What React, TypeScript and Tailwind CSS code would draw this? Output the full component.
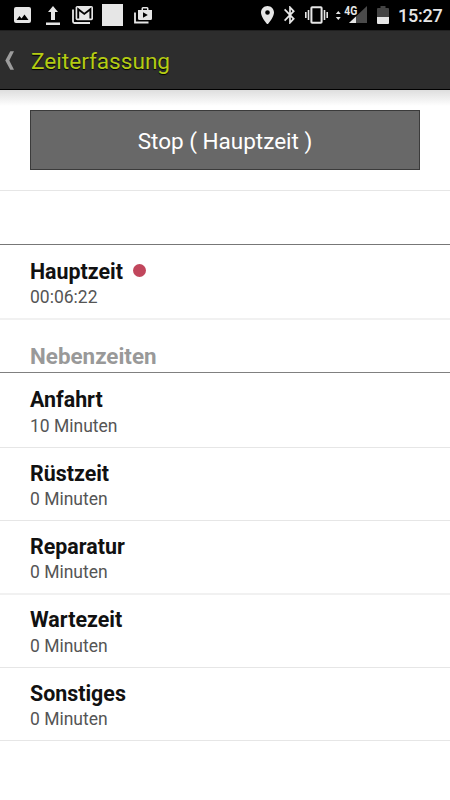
import React from 'react';

const nebenzeiten = [
  { label: 'Anfahrt', value: '10 Minuten', className: 'h-[75px] border-b border-[#e6e6e6] pt-[13px] leading-[26px]' },
  { label: 'Rüstzeit', value: '0 Minuten', className: 'h-[73px] border-b border-[#e6e6e6] pt-3 leading-6' },
  { label: 'Reparatur', value: '0 Minuten', className: 'h-[74px] border-b-2 border-[#f1f1f1] pt-3 leading-6' },
  { label: 'Wartezeit', value: '0 Minuten', className: 'h-[73px] border-b border-[#e6e6e6] pt-[11px] leading-[26px]' },
  { label: 'Sonstiges', value: '0 Minuten', className: 'h-[73px] border-b border-[#e6e6e6] pt-3 leading-6' },
];

const StatusBar: React.FC = () => (
  <div className="flex h-[30px] items-start bg-black pr-2 pl-3.5 text-[#e6e6e6]">
    {/* Notifications */}
    <svg className="mt-[7px] h-4 w-[17px]" viewBox="0 0 17 16" fill="currentColor">
      <path fillRule="evenodd" d="M2 0h13a2 2 0 0 1 2 2v12a2 2 0 0 1-2 2H2a2 2 0 0 1-2-2V2a2 2 0 0 1 2-2ZM2.5 13h12l-4-5.4-3 3.9-2-2.4Z" />
    </svg>
    <svg className="mt-1.5 ml-[15px] h-[19px] w-[14px]" viewBox="0 0 14 19" fill="currentColor">
      <path d="M7 0 12 6H9v8H5V6H2ZM0 16.5h14V19H0Z" />
    </svg>
    <svg className="mt-1.5 ml-[12px] h-[18px] w-[21px]" viewBox="0 0 21 18" fill="none">
      <path d="M1 3.5v12A1.5 1.5 0 0 0 2.5 17H18" stroke="currentColor" strokeWidth="1.8" />
      <rect x="3.6" y="0" width="17.4" height="14.2" rx="1.6" fill="currentColor" />
      <path d="M6.2 12.4V3.2l6.1 4.7 6.1-4.7v9.2" stroke="#000" strokeWidth="1.9" />
    </svg>
    <div className="mt-1 ml-[9px] h-[21.5px] w-[21px] bg-[#e6e6e6]" />
    <svg className="mt-[7px] ml-[11px] h-[17px] w-[18px]" viewBox="0 0 18 17">
      <path d="M1 5.5v10h13.5" fill="none" stroke="currentColor" strokeWidth="1.8" />
      <path fill="currentColor" fillRule="evenodd" d="M7.5 3V1.5A1.5 1.5 0 0 1 9 0h4a1.5 1.5 0 0 1 1.5 1.5V3H18v8.5a1.5 1.5 0 0 1-1.5 1.5h-11A1.5 1.5 0 0 1 4 11.5V3Zm1.5 0h4V1.5H9ZM9 5.2v5.6L13.8 8Z" />
    </svg>

    {/* System icons */}
    <svg className="mt-[5.5px] ml-auto h-[18.5px] w-[13px]" viewBox="5 2 14 20" preserveAspectRatio="none" fill="currentColor">
      <path d="M12 2C8.13 2 5 5.13 5 9c0 5.25 7 13 7 13s7-7.75 7-13c0-3.87-3.13-7-7-7zm0 9.5a2.5 2.5 0 0 1 0-5 2.5 2.5 0 0 1 0 5z" />
    </svg>
    <svg className="mt-1.5 ml-2.5 h-[18px] w-3" viewBox="5 2 14 20" preserveAspectRatio="none" fill="currentColor">
      <path d="M17.71 7.71 12 2h-1v7.59L6.41 5 5 6.41 10.59 12 5 17.59 6.41 19 11 14.41V22h1l5.71-5.71-4.3-4.29 4.3-4.29zM13 5.83l1.88 1.88L13 9.59V5.83zm1.88 10.46L13 18.17v-3.76l1.88 1.88z" />
    </svg>
    <svg className="mt-1.5 ml-[9px] h-[18px] w-[23px]" viewBox="0 0 23 18" fill="none" stroke="currentColor">
      <rect x="6.4" y="1.2" width="10.2" height="15.6" rx="0.8" strokeWidth="2" />
      <path d="M3.5 4v10M.8 6v6M19.5 4v10M22.2 6v6" strokeWidth="1.6" />
    </svg>
    <svg className="mt-[5px] ml-[7px] h-[19px] w-8" viewBox="0 0 32 19">
      <path fill="currentColor" d="M.8 9 3.3 6l2.5 3ZM.8 12l2.5 3 2.5-3Z" />
      <path fill="#4a4a4a" d="M32 1v17H14Z" />
      <path fill="currentColor" d="M21 11.4V18h-7Z" />
      <text x="9.2" y="9.5" fill="#e6e6e6" stroke="#000" strokeWidth="1.6" paintOrder="stroke" fontSize="12" fontWeight="700" textLength="13" lengthAdjust="spacingAndGlyphs">4G</text>
    </svg>
    <svg className="mt-1.5 ml-2.5 h-[18px] w-3" viewBox="0 0 12 18">
      <path fill="#444" d="M3.5 0h5v2H11a1 1 0 0 1 1 1v8H0V3a1 1 0 0 1 1-1h2.5Z" />
      <path fill="currentColor" d="M0 11h12v6a1 1 0 0 1-1 1H1a1 1 0 0 1-1-1Z" />
    </svg>
    <span className="mt-[5px] ml-[9px] w-[44px] text-[18px] leading-[22px] font-medium tracking-[-0.25px] whitespace-nowrap">15:27</span>
  </div>
);

const Header: React.FC = () => (
  <header className="flex h-[60px] items-center border-t border-b border-t-[#202020] border-b-black bg-[#2d2d2d] pl-[5px]">
    <svg className="h-[19px] w-[10px]" viewBox="0 0 10 19" fill="#9c9c9c">
      <path d="M5.3.3H9L4.3 9.5 9 18.7H5.3L.3 9.5Z" />
    </svg>
    <h1 className="mt-1 ml-[16px] text-[22.6px] leading-7 text-[#b5cc14] [text-shadow:0_1px_1px_#000]">Zeiterfassung</h1>
  </header>
);

interface TimeRowProps {
  label: string;
  value: string;
  className: string;
  active?: boolean;
}

const TimeRow: React.FC<TimeRowProps> = ({ label, value, className, active }) => (
  <li className={`${className} px-[30px]`}>
    <div className="flex items-center text-[21.4px] leading-[27px] font-bold text-[#111]">
      {label}
      {active && <span className="mb-[2px] ml-[10px] h-[13px] w-[13px] rounded-full bg-[#c1465c]" />}
    </div>
    <p className="text-[17.5px] text-[#555]">{value}</p>
  </li>
);

export default function App() {
  return (
    <div className="h-[800px] w-[450px] overflow-hidden bg-white font-['Roboto',sans-serif]">
      <StatusBar />
      <Header />
      <section className="h-[101px] border-b border-[#e6e6e6] bg-linear-to-b from-[#dedede] from-0% to-white to-16% px-[30px] pt-5">
        <button className="h-[60px] w-full border border-[#3b3b3b] bg-[#686868] pt-[3px] text-[22.5px] text-white">
          Stop ( Hauptzeit )
        </button>
      </section>
      <div className="h-[54px] border-b border-[#777]" />
      <ul>
        <TimeRow label="Hauptzeit" value="00:06:22" className="h-[75px] border-b-2 border-[#f1f1f1] pt-[13px] leading-6" active />
      </ul>
      <h2 className="h-[53px] border-b border-[#808080] px-[30px] pt-[23px] text-[22.4px] leading-[26px] font-bold text-[#999]">Nebenzeiten</h2>
      <ul>
        {nebenzeiten.map((row) => (
          <TimeRow key={row.label} {...row} />
        ))}
      </ul>
    </div>
  );
}
